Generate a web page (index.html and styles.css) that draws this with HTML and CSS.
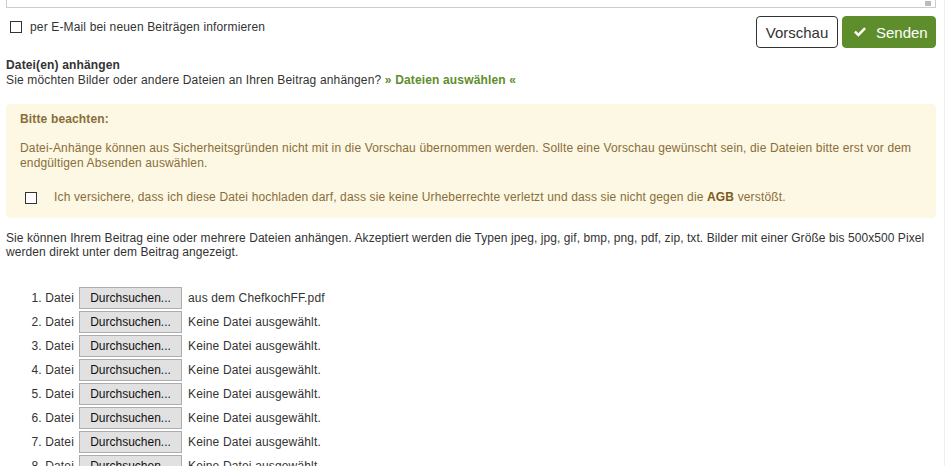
FILE: index.html
```html
<!DOCTYPE html>
<html>
  <head>
    <title>Beitrag schreiben</title>
    <link rel="stylesheet" href="styles.css">
  </head>
  <body>
    <div class="page">
      <!-- Ende des Textfelds -->
      <div class="textarea_end">
        <span class="grip"></span>
      </div>

      <div class="top_bar">
        <label class="check_label">
          <span class="check_box"></span>
          per E-Mail bei neuen Beiträgen informieren
        </label>
        <div class="btn_group">
          <button class="btn btn_preview">Vorschau</button>
          <button class="btn btn_send">
            <svg class="icon_check" width="14" height="12" viewBox="0 0 14 12">
              <path d="M1 6.5 L2.8 4.7 L5.4 7.2 L11.2 1.3 L13 3.1 L5.4 10.8 Z" fill="#fff"/>
            </svg>
            Senden
          </button>
        </div>
      </div>

      <div class="attach_head">
        <div class="attach_title">Datei(en) anhängen</div>
        <div>Sie möchten Bilder oder andere Dateien an Ihren Beitrag anhängen? <a class="attach_link" href="#">» Dateien auswählen «</a></div>
      </div>

      <!-- Hinweis -->
      <div class="notice">
        <div class="notice_title">Bitte beachten:</div>
        <p class="notice_text">Datei-Anhänge können aus Sicherheitsgründen nicht mit in die Vorschau übernommen werden. Sollte eine Vorschau gewünscht sein, die Dateien bitte erst vor dem endgültigen Absenden auswählen.</p>
        <label class="notice_check">
          <span class="check_box"></span>
          <span>Ich versichere, dass ich diese Datei hochladen darf, dass sie keine Urheberrechte verletzt und dass sie nicht gegen die <b>AGB</b> verstößt.</span>
        </label>
      </div>

      <p class="types_text">Sie können Ihrem Beitrag eine oder mehrere Dateien anhängen. Akzeptiert werden die Typen jpeg, jpg, gif, bmp, png, pdf, zip, txt. Bilder mit einer Größe bis 500x500 Pixel werden direkt unter dem Beitrag angezeigt.</p>

      <div class="file_list">
        <div class="file_row">
          <span class="file_label">1. Datei</span>
          <button class="file_btn">Durchsuchen...</button>
          <span class="file_name">aus dem ChefkochFF.pdf</span>
        </div>
        <div class="file_row">
          <span class="file_label">2. Datei</span>
          <button class="file_btn">Durchsuchen...</button>
          <span class="file_name">Keine Datei ausgewählt.</span>
        </div>
        <div class="file_row">
          <span class="file_label">3. Datei</span>
          <button class="file_btn">Durchsuchen...</button>
          <span class="file_name">Keine Datei ausgewählt.</span>
        </div>
        <div class="file_row">
          <span class="file_label">4. Datei</span>
          <button class="file_btn">Durchsuchen...</button>
          <span class="file_name">Keine Datei ausgewählt.</span>
        </div>
        <div class="file_row">
          <span class="file_label">5. Datei</span>
          <button class="file_btn">Durchsuchen...</button>
          <span class="file_name">Keine Datei ausgewählt.</span>
        </div>
        <div class="file_row">
          <span class="file_label">6. Datei</span>
          <button class="file_btn">Durchsuchen...</button>
          <span class="file_name">Keine Datei ausgewählt.</span>
        </div>
        <div class="file_row">
          <span class="file_label">7. Datei</span>
          <button class="file_btn">Durchsuchen...</button>
          <span class="file_name">Keine Datei ausgewählt.</span>
        </div>
        <div class="file_row">
          <span class="file_label">8. Datei</span>
          <button class="file_btn">Durchsuchen...</button>
          <span class="file_name">Keine Datei ausgewählt.</span>
        </div>
      </div>
    </div>
  </body>
</html>
```

FILE: styles.css
```css
html, body {
  margin: 0;
  padding: 0;
  background: #fff;
  overflow: hidden;
}

body {
  font-family: "Liberation Sans", Arial, sans-serif;
  font-size: 12px;
  letter-spacing: 0.15px;
  color: #333;
}

.page {
  width: 930px;
  padding-left: 6px;
  padding-right: 8px;
  border-right: 1px solid #eee;
  height: 466px;
  overflow: hidden;
}

/* Textfeld (nur unteres Ende sichtbar) */
.textarea_end {
  height: 7px;
  border: 1px solid #ccc;
  border-top: none;
  position: relative;
}

.grip {
  position: absolute;
  right: 4px;
  top: 1px;
  width: 6px;
  height: 5px;
  background-image: radial-gradient(circle, #bbb 0.8px, transparent 1px);
  background-size: 2px 2px;
}

.top_bar {
  display: flex;
  justify-content: space-between;
  align-items: flex-start;
  margin-top: 8px;
}

.check_label {
  display: flex;
  align-items: center;
  gap: 8px;
  margin-top: 4px;
  margin-left: 4px;
  line-height: 14px;
}

.check_box {
  display: inline-block;
  width: 10px;
  height: 10px;
  border: 1px solid #333;
  background: #fff;
  flex: none;
}

.btn_group {
  display: flex;
  gap: 4px;
}

.btn {
  font-family: "Liberation Sans", Arial, sans-serif;
  font-size: 15px;
  height: 32px;
  border-radius: 4px;
  cursor: pointer;
  display: flex;
  align-items: center;
}

.btn_preview {
  width: 82px;
  justify-content: center;
  background: #fff;
  color: #333;
  border: 1px solid #333;
}

.btn_send {
  width: 94px;
  padding: 0 0 0 10px;
  gap: 9px;
  background: #5e8e2c;
  color: #fff;
  border: 1px solid #5e8e2c;
}

.attach_head {
  margin-top: 10px;
  line-height: 15px;
}

.attach_title {
  font-weight: bold;
}

.attach_link {
  color: #5e8e2c;
  font-weight: bold;
  text-decoration: none;
}

/* Hinweis-Box */
.notice {
  margin-top: 16px;
  background: #fcf8e3;
  border-radius: 4px;
  color: #8a6d3b;
  padding: 8px 14px 13px 14px;
  line-height: 15px;
}

.notice_title {
  font-weight: bold;
}

.notice_text {
  margin: 14px 0 0 0;
}

.notice_check {
  display: flex;
  align-items: center;
  gap: 17px;
  margin-top: 19px;
  margin-left: 5px;
}

.notice_check b {
  color: #7a5a22;
}

.types_text {
  margin: 13px 0 0 0;
  line-height: 14px;
  letter-spacing: 0.07px;
}

.file_list {
  margin-top: 27px;
}

.file_row {
  display: flex;
  align-items: center;
  height: 24px;
}

.file_label {
  width: 68px;
  text-align: right;
}

.file_btn {
  margin-left: 5px;
  width: 103px;
  height: 22px;
  background: #e1e1e1;
  border: 1px solid #adadad;
  font-family: "Liberation Sans", Arial, sans-serif;
  font-size: 12px;
  color: #111;
  padding: 0;
}

.file_name {
  margin-left: 6px;
}
```
